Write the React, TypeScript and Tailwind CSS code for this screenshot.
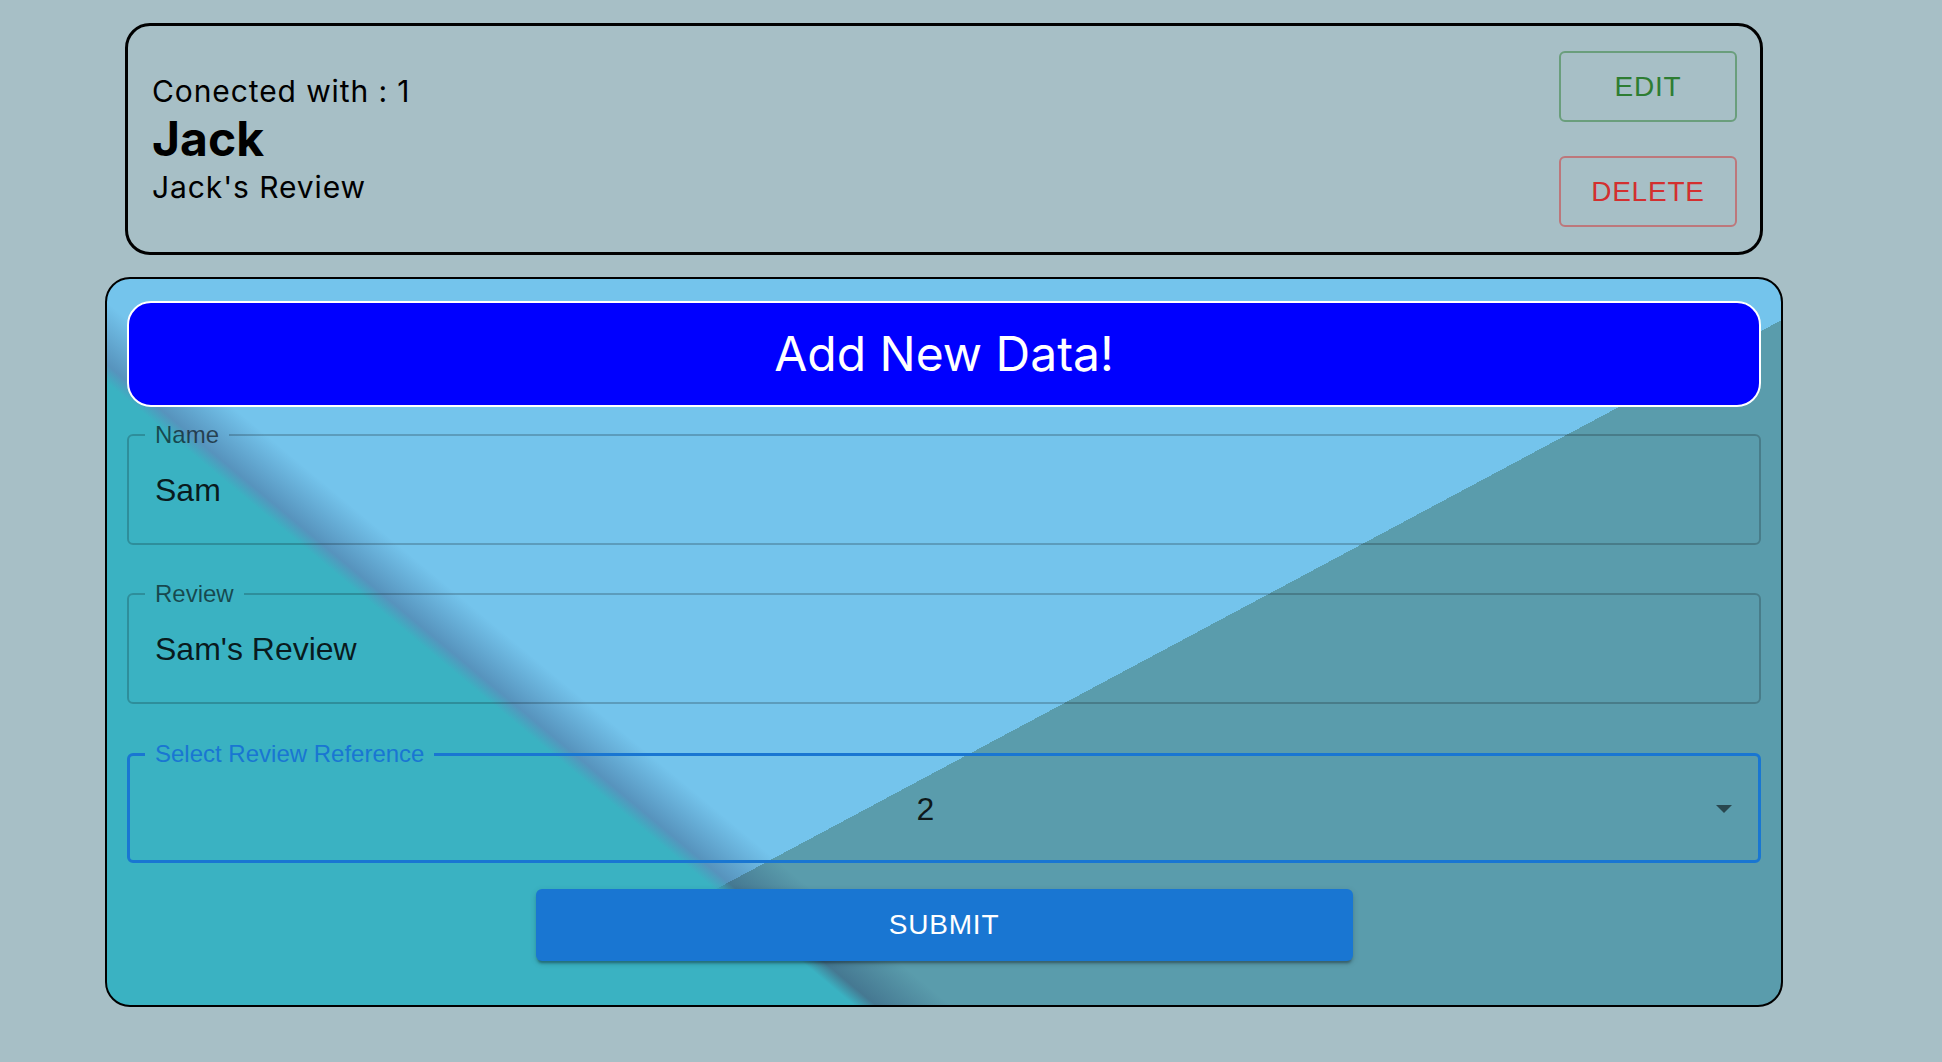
import React from 'react';

const field = 'font-["Liberation_Sans",Arial,sans-serif]';

const TextBox = ({ label, value }: { label: string; value: string }) => (
  <fieldset className={`h-[122px] min-w-0 rounded-[6px] border-2 border-black/20 ${field}`}>
    <legend className="ml-[16px] px-[10px] text-[24px] leading-[24px] text-black/60">{label}</legend>
    <div className="pl-[26px] pt-[23px] pb-[33px] text-[32px] leading-[40px] text-black/85">{value}</div>
  </fieldset>
);

export default function App() {
  return (
    <div className="min-h-screen bg-[#a7bfc6] pt-[23px]">
      <div className="ml-[105px] w-[1678px]">
        {/* connected card */}
        <div className="mx-[20px] flex h-[232px] items-center justify-between rounded-[25px] border-[3px] border-black pl-[24px] pr-[23px]">
          <div className='font-["Inter",sans-serif] text-black'>
            <div className="text-[30px] leading-[36px] tracking-[0.9px]">Conected with : 1</div>
            <div className="text-[48px] font-bold leading-[60px]">Jack</div>
            <div className="text-[30px] leading-[36px] tracking-[0.9px]">Jack's Review</div>
          </div>
          <div className={`flex flex-col gap-[34px] ${field}`}>
            <button className="h-[71px] w-[178px] rounded-[6px] border-2 border-[#2e7d32]/50 text-[28px] tracking-[0.8px] text-[#2e7d32]">
              EDIT
            </button>
            <button className="h-[71px] w-[178px] rounded-[6px] border-2 border-[#d32f2f]/50 text-[28px] tracking-[0.8px] text-[#d32f2f]">
              DELETE
            </button>
          </div>
        </div>

        {/* add form */}
        <div className="mt-[22px] flex h-[730px] flex-col rounded-[25px] border-2 border-black bg-[#74c4ec] bg-[linear-gradient(39.8deg,#3ab2c2_0px,#3ab2c2_478px,rgba(25,45,90,0.32)_492px,rgba(25,45,90,0)_540px),linear-gradient(151.9deg,rgba(90,156,172,0)_825px,#5a9cac_825px)] pl-[20px] pr-[20px] pt-[22px] pb-[43px]">
          <div className='flex h-[106px] items-center justify-center rounded-[24px] border-2 border-white bg-[#0000ff] font-["Inter",sans-serif] text-[48px] leading-none text-white'>
            Add New Data!
          </div>

          <div className="mt-[16px] flex flex-col gap-[37px]">
            <TextBox label="Name" value="Sam" />
            <TextBox label="Review" value="Sam's Review" />
          </div>

          <fieldset className={`mt-[38px] h-[121px] min-w-0 rounded-[6px] border-[3px] border-[#1976d2] ${field}`}>
            <legend className="ml-[15px] px-[10px] text-[24px] leading-[24px] text-[#1976d2]">Select Review Reference</legend>
            <div className="flex items-center pl-[26px] pt-[23px] pb-[31px] text-[32px] leading-[40px] text-black/85">
              <div className="flex-1 text-center">2</div>
              <svg className="ml-[21px] mr-[26px]" width="16" height="8" viewBox="0 0 16 8">
                <path d="M0 0h16L8 8z" fill="rgba(0,0,0,0.54)" />
              </svg>
            </div>
          </fieldset>

          <button
            className={`mx-auto mt-[26px] h-[72px] w-[817px] rounded-[6px] bg-[#1976d2] text-[28px] tracking-[0.8px] text-white shadow-[0px_4px_2px_-2px_rgba(0,0,0,0.2),0px_3px_3px_0px_rgba(0,0,0,0.14),0px_2px_7px_0px_rgba(0,0,0,0.12)] ${field}`}
          >
            SUBMIT
          </button>
        </div>
      </div>
    </div>
  );
}
